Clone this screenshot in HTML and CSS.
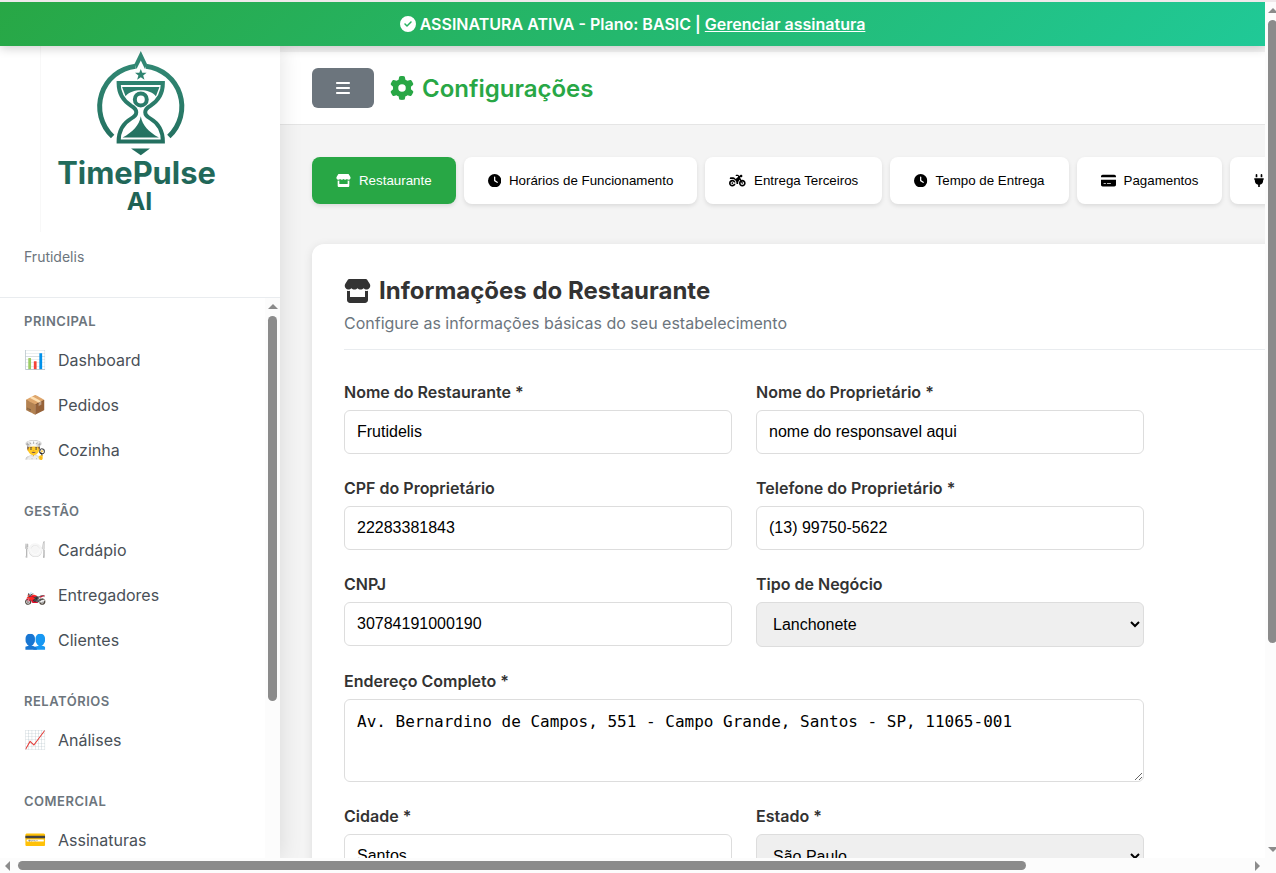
FILE: index.html
```html
<!DOCTYPE html>
<html lang="pt-BR">
<head>
<meta charset="utf-8">
<meta name="viewport" content="width=device-width, initial-scale=1">
<title>Configurações</title>
<link rel="stylesheet" href="styles.css">
</head>
<body>
<svg class="sprite" aria-hidden="true">
  <symbol id="store" viewBox="0 0 576 512"><path d="M547.6 103.8L490.3 13.1C485.2 5 476.1 0 466.4 0H109.6C99.9 0 90.8 5 85.7 13.1L28.3 103.8c-29.6 46.8-3.4 111.9 51.9 119.4c4 .5 8.1 .8 12.1 .8c26.1 0 49.3-11.4 65.2-29c15.9 17.6 39.1 29 65.2 29c26.1 0 49.3-11.4 65.2-29c15.9 17.6 39.1 29 65.2 29c26.2 0 49.3-11.4 65.2-29c16 17.6 39.1 29 65.2 29c4.1 0 8.1-.3 12.1-.8c55.5-7.4 81.8-72.5 52.1-119.4zM499.7 254.9l-.1 0c-5.3 .7-10.7 1.1-16.2 1.1c-12.4 0-24.3-1.9-35.4-5.3V384H128V250.6c-11.2 3.5-23.2 5.4-35.6 5.4c-5.5 0-11-.4-16.3-1.1l-.1 0c-4.1-.6-8.1-1.3-12-2.3V384v64c0 35.3 28.7 64 64 64H448c35.3 0 64-28.7 64-64V384 252.6c-4 1-8 1.8-12.3 2.3z"/></symbol>
  <symbol id="clock" viewBox="0 0 512 512"><path d="M256 0a256 256 0 1 1 0 512A256 256 0 1 1 256 0zM232 120V256c0 8 4 15.5 10.7 20l96 64c11 7.4 25.9 4.4 33.3-6.7s4.4-25.9-6.7-33.3L280 243.2V120c0-13.3-10.7-24-24-24s-24 10.7-24 24z"/></symbol>
</svg>

<div class="window">
  <div class="app">
    <div class="banner">
      <svg class="icon banner-icon" viewBox="0 0 512 512" aria-hidden="true"><path d="M256 512A256 256 0 1 0 256 0a256 256 0 1 0 0 512zM369 209L241 337c-9.4 9.4-24.6 9.4-33.9 0l-64-64c-9.4-9.4-9.4-24.6 0-33.9s24.6-9.4 33.9 0l47 47L335 175c9.4-9.4 24.6-9.4 33.9 0s9.4 24.6 0 33.9z"/></svg>
      <span>ASSINATURA ATIVA - Plano: BASIC | <a href="#assinatura">Gerenciar assinatura</a></span>
    </div>

    <aside class="sidebar">
      <div class="brand">
        <svg class="logo" viewBox="0 0 200 187" role="img" aria-label="TimePulse AI">
          <defs>
            <linearGradient id="teal" gradientUnits="userSpaceOnUse" x1="0" y1="5" x2="0" y2="165">
              <stop offset="0" stop-color="#338b76"/>
              <stop offset="0.6" stop-color="#236f5f"/>
              <stop offset="1" stop-color="#1f6053"/>
            </linearGradient>
          </defs>
          <g fill="none" stroke="url(#teal)">
            <path stroke-width="5" d="M72 91A41 41 0 0 1 95 20.3M128.500 91A41 41 0 0 0 105.500 20.300"/>
            <path stroke-width="4" d="M78 37.300H122.500C122.500 50 116.500 56 110 60C103 64 103 69 110 73C118.500 78 122.500 85 122.500 96H78C78 85 82 78 90.500 73C97.500 69 97.500 64 90.500 60C84 56 78 50 78 37.300Z"/>
            <circle stroke-width="4" cx="100.300" cy="53.700" r="6"/>
          </g>
          <g fill="url(#teal)">
            <path d="M100.300 5L106.500 18L104.500 23L100.300 14.500L96 23L94 18Z"/>
            <path d="M100.300 23l1.500 4h4.300l-3.400 2.700 1.300 4.300-3.700-2.500-3.700 2.500 1.300-4.300-3.400-2.700h4.300z"/>
            <path d="M81.500 41.300H119L115.500 50.500C109 42.500 91.500 42.500 85 50.500Z"/>
            <path d="M100.300 70.500C102 80 108 86 118.500 92H82C92.500 86 98.500 80 100.300 70.500Z"/>
            <path d="M90.500 103H109.500L100.300 109.700Z"/>
            <text text-anchor="middle"><tspan x="96" y="139" font-size="31">TimePulse</tspan><tspan x="99" y="165" font-size="25">AI</tspan></text>
          </g>
        </svg>
        <p class="brand-name">Frutidelis</p>
      </div>
      <div class="nav-wrap">
        <nav class="nav">
          <section>
            <h2>Principal</h2>
            <a href="#dashboard"><span class="emoji">📊</span>Dashboard</a>
            <a href="#pedidos"><span class="emoji">📦</span>Pedidos</a>
            <a href="#cozinha"><span class="emoji">👨‍🍳</span>Cozinha</a>
          </section>
          <section>
            <h2>Gestão</h2>
            <a href="#cardapio"><span class="emoji">🍽️</span>Cardápio</a>
            <a href="#entregadores"><span class="emoji">🏍️</span>Entregadores</a>
            <a href="#clientes"><span class="emoji">👥</span>Clientes</a>
          </section>
          <section>
            <h2>Relatórios</h2>
            <a href="#analises"><span class="emoji">📈</span>Análises</a>
          </section>
          <section>
            <h2>Comercial</h2>
            <a href="#assinaturas"><span class="emoji">💳</span>Assinaturas</a>
          </section>
        </nav>
        <div class="bar bar-v" aria-hidden="true">
          <i class="arrow up"></i>
          <div class="track"><div class="thumb" style="height: 72%"></div></div>
        </div>
      </div>
    </aside>

    <main class="main">
      <header class="header">
        <button class="menu" type="button" aria-label="Menu">
          <svg class="icon" viewBox="0 0 448 512" aria-hidden="true"><path d="M0 96C0 78.300 14.300 64 32 64H416c17.700 0 32 14.300 32 32s-14.300 32-32 32H32C14.300 128 0 113.700 0 96zM0 256c0-17.700 14.300-32 32-32H416c17.700 0 32 14.300 32 32s-14.300 32-32 32H32c-17.700 0-32-14.300-32-32zM448 416c0 17.700-14.300 32-32 32H32c-17.700 0-32-14.300-32-32s14.300-32 32-32H416c17.700 0 32 14.300 32 32z"/></svg>
        </button>
        <h1>
          <svg class="icon" viewBox="0 0 512 512" aria-hidden="true"><path d="M495.9 166.6c3.2 8.7 .5 18.4-6.4 24.6l-43.3 39.4c1.1 8.3 1.7 16.8 1.7 25.4s-.6 17.1-1.7 25.4l43.3 39.4c6.9 6.2 9.6 15.9 6.4 24.6c-4.4 11.9-9.7 23.3-15.8 34.3l-4.7 8.1c-6.6 11-14 21.4-22.1 31.2c-5.9 7.2-15.7 9.6-24.5 6.8l-55.7-17.7c-13.4 10.3-28.2 18.9-44 25.4l-12.5 57.1c-2 9.1-9 16.3-18.2 17.8c-13.8 2.3-28 3.5-42.5 3.5s-28.7-1.2-42.5-3.5c-9.2-1.5-16.2-8.7-18.2-17.8l-12.5-57.1c-15.8-6.5-30.6-15.1-44-25.4L83.1 425.9c-8.8 2.8-18.6 .3-24.5-6.8c-8.1-9.8-15.5-20.2-22.1-31.2l-4.7-8.1c-6.1-11-11.4-22.4-15.8-34.3c-3.2-8.7-.5-18.4 6.4-24.6l43.3-39.4C64.6 273.1 64 264.6 64 256s.6-17.1 1.700-25.4L22.4 191.2c-6.9-6.2-9.6-15.9-6.4-24.6c4.4-11.9 9.7-23.3 15.8-34.3l4.7-8.1c6.6-11 14-21.4 22.1-31.2c5.9-7.2 15.7-9.6 24.5-6.8l55.7 17.7c13.4-10.3 28.2-18.9 44-25.4l12.5-57.1c2-9.1 9-16.3 18.2-17.8C227.3 1.2 241.5 0 256 0s28.7 1.2 42.5 3.5c9.2 1.5 16.2 8.7 18.2 17.8l12.5 57.1c15.8 6.5 30.6 15.1 44 25.4l55.7-17.7c8.8-2.8 18.6-.3 24.5 6.8c8.1 9.8 15.5 20.2 22.1 31.2l4.7 8.1c6.1 11 11.4 22.4 15.8 34.3zM256 336a80 80 0 1 0 0-160 80 80 0 1 0 0 160z"/></svg>
          Configurações
        </h1>
      </header>

      <div class="content">
        <div class="tabs">
          <button type="button" class="tab active"><svg class="icon" viewBox="0 0 576 512" aria-hidden="true"><use href="#store"/></svg>Restaurante</button>
          <button type="button" class="tab"><svg class="icon" viewBox="0 0 512 512" aria-hidden="true"><use href="#clock"/></svg>Horários de Funcionamento</button>
          <button type="button" class="tab"><svg class="icon" viewBox="0 0 640 512" aria-hidden="true"><path d="M280 32c-13.3 0-24 10.7-24 24s10.7 24 24 24h57.7l16.4 30.3L256 192l-45.3-45.3c-12-12-28.3-18.7-45.3-18.7H64c-17.7 0-32 14.3-32 32v32h96c88.4 0 160 71.6 160 160c0 11-1.1 21.7-3.2 32h70.4c-2.1-10.3-3.2-21-3.2-32c0-52.2 25-98.6 63.7-127.8l15.4 28.6C402.4 276.3 384 312 384 352c0 70.7 57.3 128 128 128s128-57.3 128-128s-57.3-128-128-128c-13.5 0-26.5 2.1-38.7 6L418.2 128H480c17.7 0 32-14.3 32-32V64c0-17.7-14.3-32-32-32H459.6c-7.5 0-14.7 2.6-20.5 7.4L391.7 78.9l-14-26c-7-12.9-20.5-21-35.2-21H280zM462.7 311.2l28.2 52.2c6.3 11.7 20.9 16 32.5 9.7s16-20.9 9.7-32.5l-28.2-52.2c2.3-.3 4.7-.4 7.1-.4c35.3 0 64 28.7 64 64s-28.7 64-64 64s-64-28.7-64-64c0-15.5 5.5-29.7 14.7-40.8zM187.3 376c-9.5 23.5-32.5 40-59.3 40c-35.3 0-64-28.7-64-64s28.7-64 64-64c26.9 0 49.9 16.5 59.3 40h66.4C242.5 268.8 190.5 224 128 224C57.3 224 0 281.3 0 352s57.3 128 128 128c62.5 0 114.5-44.8 125.800-104H187.3zM128 384a32 32 0 1 0 0-64 32 32 0 1 0 0 64z"/></svg>Entrega Terceiros</button>
          <button type="button" class="tab"><svg class="icon" viewBox="0 0 512 512" aria-hidden="true"><use href="#clock"/></svg>Tempo de Entrega</button>
          <button type="button" class="tab"><svg class="icon" viewBox="0 0 576 512" aria-hidden="true"><path d="M64 32C28.7 32 0 60.7 0 96v32H576V96c0-35.3-28.7-64-64-64H64zM576 224H0V416c0 35.3 28.7 64 64 64H512c35.3 0 64-28.7 64-64V224zM112 352h64c8.8 0 16 7.2 16 16s-7.2 16-16 16H112c-8.8 0-16-7.2-16-16s7.2-16 16-16zm112 16c0-8.8 7.2-16 16-16H368c8.8 0 16 7.2 16 16s-7.2 16-16 16H240c-8.8 0-16-7.2-16-16z"/></svg>Pagamentos</button>
          <button type="button" class="tab" aria-label="Integrações"><svg class="icon" viewBox="0 0 384 512" aria-hidden="true"><path d="M96 0C78.3 0 64 14.3 64 32v96h64V32c0-17.7-14.3-32-32-32zM288 0c-17.7 0-32 14.3-32 32v96h64V32c0-17.7-14.3-32-32-32zM32 160c-17.7 0-32 14.3-32 32s14.3 32 32 32v32c0 77.4 55 142 128 156.8V480c0 17.7 14.3 32 32 32s32-14.3 32-32V412.8C297 398 352 333.4 352 256V224c17.7 0 32-14.3 32-32s-14.3-32-32-32H32z"/></svg></button>
        </div>

        <section class="card">
          <div class="card-head">
            <h2><svg class="icon" viewBox="0 0 576 512" aria-hidden="true"><use href="#store"/></svg>Informações do Restaurante</h2>
            <p>Configure as informações básicas do seu estabelecimento</p>
          </div>
          <form class="form">
            <div class="field"><label for="nome">Nome do Restaurante *</label><input id="nome" type="text" value="Frutidelis"></div>
            <div class="field"><label for="dono">Nome do Proprietário *</label><input id="dono" type="text" value="nome do responsavel aqui"></div>
            <div class="field"><label for="cpf">CPF do Proprietário</label><input id="cpf" type="text" value="22283381843"></div>
            <div class="field"><label for="tel">Telefone do Proprietário *</label><input id="tel" type="tel" value="(13) 99750-5622"></div>
            <div class="field"><label for="cnpj">CNPJ</label><input id="cnpj" type="text" value="30784191000190"></div>
            <div class="field"><label for="tipo">Tipo de Negócio</label><select id="tipo"><option>Lanchonete</option></select></div>
            <div class="field wide"><label for="end">Endereço Completo *</label><textarea id="end" rows="3">Av. Bernardino de Campos, 551 - Campo Grande, Santos - SP, 11065-001</textarea></div>
            <div class="field"><label for="cidade">Cidade *</label><input id="cidade" type="text" value="Santos"></div>
            <div class="field"><label for="uf">Estado *</label><select id="uf"><option>São Paulo</option></select></div>
          </form>
        </section>
      </div>
    </main>
  </div>

  <div class="bar bar-v page-v" aria-hidden="true">
    <i class="arrow up"></i>
    <div class="track"><div class="thumb" style="height: 76%"></div></div>
    <i class="arrow down"></i>
  </div>
  <div class="bar bar-h" aria-hidden="true">
    <i class="arrow left"></i>
    <div class="track"><div class="thumb" style="width: 82%"></div></div>
    <i class="arrow right"></i>
  </div>
</div>
</body>
</html>
```
FILE: styles.css
```css
* { box-sizing: border-box; }

body {
  margin: 0;
  background: #f4f4f4;
  color: #333;
  font-family: Inter, "Noto Color Emoji", sans-serif;
  font-size: 16px;
}

h1, h2, p { margin: 0; }
button, input, select { font-family: "Liberation Sans", Arial, sans-serif; }

.sprite { position: absolute; width: 0; height: 0; }
.icon { display: block; flex: none; height: 1em; fill: currentColor; }

.window {
  display: grid;
  grid-template: minmax(0, 1fr) 15px / minmax(0, 1fr) 11px;
  height: 100vh;
  border-top: 2px solid #efe9eb;
  overflow: hidden;
}

.app {
  display: grid;
  grid-template: auto minmax(0, 1fr) / 280px minmax(0, 1fr);
  overflow: hidden;
}

/* Subscription banner */
.banner {
  grid-column: 1 / -1;
  z-index: 3;
  display: flex;
  align-items: center;
  justify-content: center;
  gap: 4px;
  padding: 12px;
  background: linear-gradient(135deg, #28a745, #20c997);
  box-shadow: 0 2px 10px rgba(0, 0, 0, 0.2);
  color: #fff;
  font-weight: 600;
  line-height: 20px;
}
.banner a { color: inherit; }

/* Sidebar */
.sidebar {
  z-index: 2;
  display: flex;
  flex-direction: column;
  background: #fff;
  box-shadow: 2px 0 20px rgba(0, 0, 0, 0.1);
}
.brand {
  padding: 0 24px 30px;
  border-bottom: 1px solid #e9ecef;
}
.logo {
  display: block;
  width: 200px;
  margin: 0 auto 15px;
  border-left: 1px solid #f8f8f8;
  font-family: Inter, sans-serif;
  font-weight: 700;
}
.brand-name { color: #6c757d; font-size: 14px; line-height: 20px; }

.nav-wrap { display: flex; flex: 1; min-height: 0; }
.nav { flex: 1; padding-top: 16px; overflow: hidden; }
.nav section { margin-bottom: 32px; }
.nav h2 {
  margin-bottom: 8px;
  padding: 0 24px;
  color: #6c757d;
  font-size: 13px;
  font-weight: 600;
  letter-spacing: 0.5px;
  line-height: 15px;
  text-transform: uppercase;
}
.nav a {
  display: flex;
  align-items: center;
  gap: 12px;
  height: 45px;
  padding: 0 24px;
  color: #495057;
  text-decoration: none;
}
.emoji { width: 22px; font-size: 18px; line-height: 21px; }

/* Main column */
.main { padding-top: 6px; overflow: hidden; }
.header {
  display: flex;
  align-items: center;
  gap: 16px;
  padding: 16px 32px;
  background: #fff;
  border-bottom: 1px solid #e5e5e5;
}
.menu {
  padding: 12px 24px;
  border: 0;
  border-radius: 6px;
  background: #6c757d;
  color: #fff;
  font-size: 16px;
}
.header h1 {
  display: flex;
  align-items: center;
  gap: 8px;
  color: #28a745;
  font-size: 24px;
  font-weight: 600;
}

.content { min-width: 1200px; padding: 32px; }
.tabs { display: flex; gap: 8px; margin-bottom: 40px; }
.tab {
  display: flex;
  align-items: center;
  gap: 8px;
  padding: 16px 24px;
  border: 0;
  border-radius: 8px;
  background: #fff;
  box-shadow: 0 2px 4px rgba(0, 0, 0, 0.1);
  color: #000;
  white-space: nowrap;
}
.tab.active { background: #28a745; color: #fff; }

.card {
  padding: 32px;
  border-radius: 12px;
  background: #fff;
  box-shadow: 0 2px 10px rgba(0, 0, 0, 0.1);
}
.card-head {
  margin-bottom: 32px;
  padding-bottom: 16px;
  border-bottom: 1px solid #e9ecef;
}
.card-head h2 {
  display: flex;
  align-items: center;
  gap: 8px;
  margin-bottom: 8px;
  font-size: 24px;
  font-weight: 700;
  line-height: 29px;
}
.card-head p { color: #6c757d; line-height: 20px; }

.form {
  display: grid;
  grid-template-columns: 1fr 1fr;
  gap: 24px;
  max-width: 800px;
}
.field { display: flex; flex-direction: column; align-items: stretch; }
.wide { grid-column: 1 / -1; }
.field label { margin-bottom: 8px; font-weight: 600; line-height: 20px; }
.field input, .field select, .field textarea {
  padding: 12px;
  border: 1px solid #ddd;
  border-radius: 6px;
  color: #000;
  font-size: 16px;
}
.field input, .field textarea { background: #fff; }
.field select { background: #efefef; }
.field textarea { font-family: "DejaVu Sans Mono", monospace; resize: vertical; }

/* Scrollbars */
.bar { display: flex; align-items: center; background: #fcfcfc; }
.bar-v { flex-direction: column; flex: none; width: 15px; padding-top: 6px; }
.bar-h { grid-column: 1 / -1; padding: 0 16px 0 5px; }
.page-v { padding-bottom: 6px; }
.track { flex: 1; }
.bar-v .track { width: 9px; margin: 7px 0; }
.bar-h .track { height: 9px; margin: 0 8px; }
.thumb { height: 100%; border-radius: 5px; background: #8b8b8b; }
.arrow { border: 5px solid transparent; }
.up { border-top: 0; border-bottom-color: #8b8b8b; }
.down { border-bottom: 0; border-top-color: #8b8b8b; }
.left { border-left: 0; border-right-color: #8b8b8b; }
.right { border-right: 0; border-left-color: #8b8b8b; }
```
